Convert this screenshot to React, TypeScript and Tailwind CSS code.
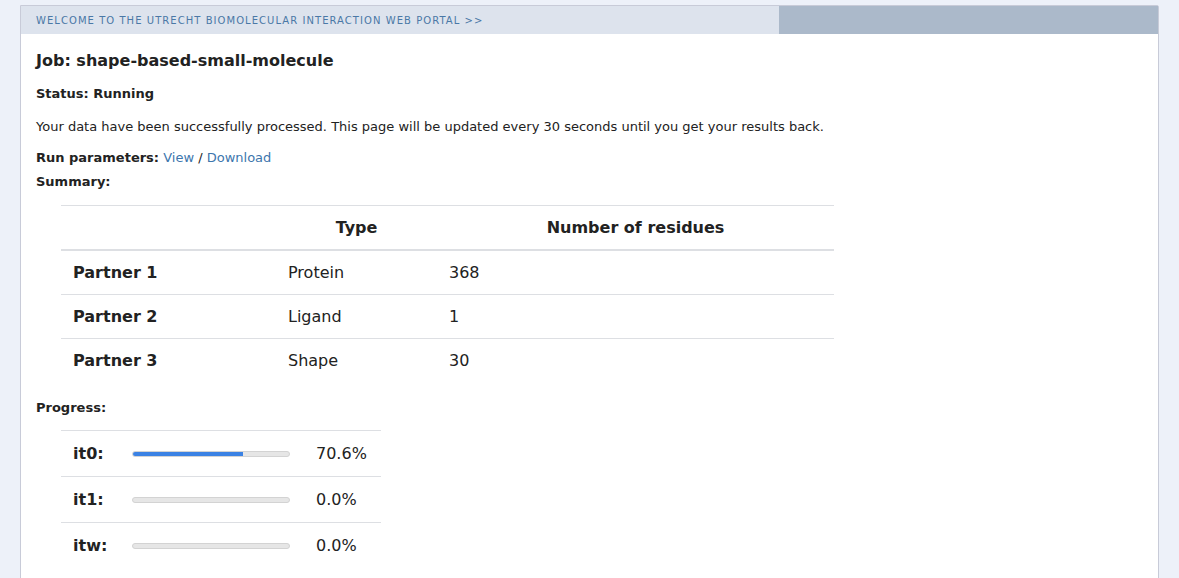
import React from "react";

const rows = [
  { name: "Partner 1", type: "Protein", n: "368" },
  { name: "Partner 2", type: "Ligand", n: "1" },
  { name: "Partner 3", type: "Shape", n: "30" },
];

const progress = [
  { name: "it0:", pct: 70.6 },
  { name: "it1:", pct: 0 },
  { name: "itw:", pct: 0 },
];

export default function App() {
  return (
    <div
      className="min-h-screen bg-[#edf1f9] pt-[5px] pl-[20px] pr-[20px] text-[#222222]"
      style={{ fontFamily: '"DejaVu Sans", Verdana, sans-serif' }}
    >
      <div className="w-[1139px] border border-[#c8cbd8] bg-white min-h-[600px] rounded-tr-[2px]">
        <div className="flex h-[28px]">
          <div className="w-[758px] bg-[#dde3ed] flex items-center pl-[15px]">
            <span className="text-[10px] tracking-[1.05px] text-[#4a78a6]">
              WELCOME TO THE UTRECHT BIOMOLECULAR INTERACTION WEB PORTAL &gt;&gt;
            </span>
          </div>
          <div className="flex-1 bg-[#abb9ca]" />
        </div>
        <div className="pl-[15px] pr-[15px]">
          <h1 className="text-[16px] font-bold mt-[16px] leading-[22px]">
            Job: shape-based-small-molecule
          </h1>
          <div className="text-[13px] font-bold mt-[13px] leading-[18px]">Status: Running</div>
          <p className="text-[13px] mt-[15px] leading-[18px]">
            Your data have been successfully processed. This page will be updated every 30 seconds until you get your results back.
          </p>
          <div className="text-[13px] mt-[13px] leading-[18px]">
            <span className="font-bold">Run parameters:</span>{" "}
            <span className="text-[#3d76ad]">View</span> /{" "}
            <span className="text-[#3d76ad]">Download</span>
          </div>
          <div className="text-[13px] font-bold mt-[6px] leading-[18px]">Summary:</div>

          <div className="ml-[25px] mt-[14px] w-[773px]">
            <div className="grid grid-cols-[215px_161px_397px] border-t border-[#dddfe3] border-b-2 border-b-[#dddfe3] h-[46px] items-center text-[16px] font-bold">
              <div />
              <div className="text-center">Type</div>
              <div className="text-center">Number of residues</div>
            </div>
            {rows.map((r, i) => (
              <div
                key={r.name}
                className={
                  "grid grid-cols-[215px_161px_397px] h-[44px] items-center text-[16px] " +
                  (i < rows.length - 1 ? "border-b border-[#dddfe3]" : "")
                }
              >
                <div className="pl-[12px] font-bold">{r.name}</div>
                <div className="pl-[12px]">{r.type}</div>
                <div className="pl-[12px]">{r.n}</div>
              </div>
            ))}
          </div>

          <div className="text-[13px] font-bold mt-[16px] leading-[18px]">Progress:</div>

          <div className="ml-[25px] mt-[13px] w-[320px] border-t border-[#dddfe3]">
            {progress.map((p, i) => (
              <div
                key={p.name}
                className={
                  "flex items-center h-[46px] text-[16px] " +
                  (i < progress.length - 1 ? "border-b border-[#dddfe3]" : "")
                }
              >
                <div className="w-[71px] pl-[12px] font-bold">{p.name}</div>
                <div className="w-[158px] h-[6px] rounded-full bg-[#e6e6e6] border border-[#d3d3d3] overflow-hidden">
                  <div className="h-full bg-[#3b82e4]" style={{ width: `${p.pct}%` }} />
                </div>
                <div className="pl-[26px]">{p.pct.toFixed(1)}%</div>
              </div>
            ))}
          </div>
        </div>
      </div>
    </div>
  );
}
